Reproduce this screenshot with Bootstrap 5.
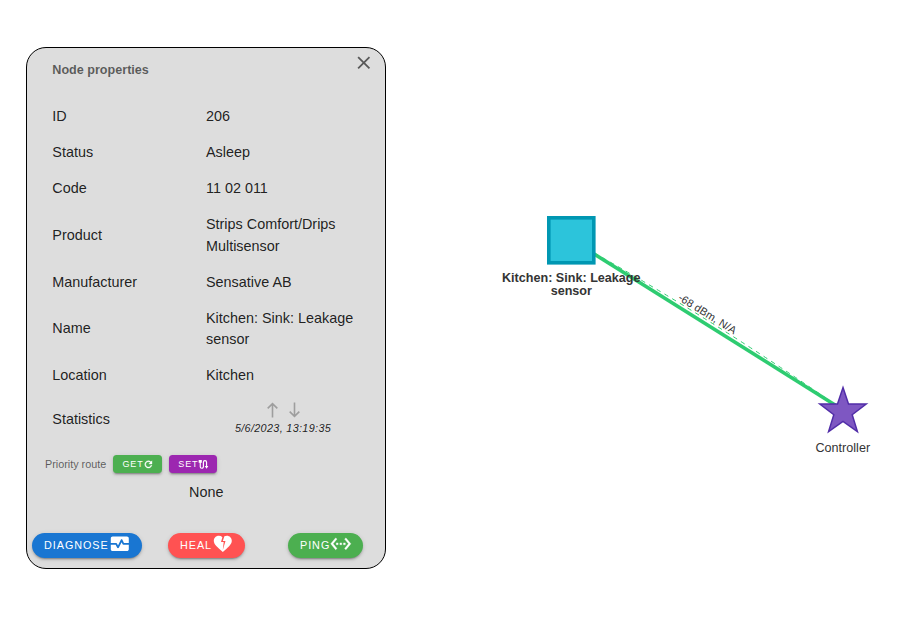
<!DOCTYPE html>
<html lang="en">
<head>
<meta charset="utf-8">
<meta name="viewport" content="width=device-width, initial-scale=1">
<title>Node properties</title>
<link href="https://cdn.jsdelivr.net/npm/bootstrap@5.3.0/dist/css/bootstrap.min.css" rel="stylesheet">
<style>
body{font-family:"Liberation Sans",Arial,sans-serif;font-size:14.4px;line-height:21.6px;color:rgba(0,0,0,.87);background:#fff;width:919px;height:627px;overflow:hidden}
svg{display:block;flex:none}
.node-panel{width:360px;height:522px;margin:47px 0 0 26px;background:#ddd;border:1px solid #000;border-radius:20px;flex:none}
.panel-head{height:51px;padding:11.6px 10.4px 0 25.3px;font-size:12.6px;font-weight:700;color:rgba(0,0,0,.6)}
.close-btn{width:21.6px;height:21.6px;padding:0;border:0;background:none;color:rgba(0,0,0,.6);margin-top:-7.4px}
.props{width:332px;margin-left:25.3px}
.prop{display:grid;grid-template-columns:153.7px 155px;align-items:center;padding:7.2px 0}
.prop-stats{height:52px;padding:0}
.arrows{gap:11px;color:#9e9e9e;height:18px;padding-left:1px}
.stamp{font-size:10.8px;line-height:18px;letter-spacing:.34px;font-style:italic}
.stats-value{margin:-1px 1px 0 0}
.route-row{height:18px;margin:9.5px 0 0 18px;font-size:10.8px;color:rgba(0,0,0,.6)}
.act{border:0;border-radius:50rem;height:25.2px;padding:0 12px;font-size:10.8px;letter-spacing:.96px;line-height:1;color:#fff;box-shadow:0 3px 1px -2px rgba(0,0,0,.2),0 2px 2px rgba(0,0,0,.14),0 1px 5px rgba(0,0,0,.12)}
.act svg{margin:-2px -.4px 0 0}
.act-sm{border-radius:3.5px;height:18px;padding:0 9px;font-size:9px;letter-spacing:.9px}
.route-row .act-sm{margin-left:7.2px}
.act-sm svg{margin:-1px -.9px 0 -.4px}
.act-green{background:#4caf50}.act-purple{background:#9c27b0}.act-blue{background:#1976d2}.act-red{background:#ff5252}
.actions{display:grid;grid-template-columns:136px 120px 80px;justify-items:start;margin:28.5px 0 0 5px}
.none-line{margin:9px 0 0 162px}
.bold-label{font-weight:700}
</style>
<script src="https://cdn.jsdelivr.net/npm/bootstrap@5.3.0/dist/js/bootstrap.bundle.min.js"></script>
</head>
<body class="d-flex">
<aside class="node-panel">
  <header class="panel-head d-flex justify-content-between"><span>Node properties</span>
    <button class="close-btn" aria-label="Close"><svg width="21.6" height="21.6" viewBox="0 0 24 24" fill="currentColor"><path d="M19 6.41 17.59 5 12 10.59 6.41 5 5 6.41 10.59 12 5 17.59 6.41 19 12 13.41 17.59 19 19 17.59 13.41 12z"/></svg></button>
  </header>
  <div class="props">
    <div class="prop"><span>ID</span><span>206</span></div>
    <div class="prop"><span>Status</span><span>Asleep</span></div>
    <div class="prop"><span>Code</span><span>11 02 011</span></div>
    <div class="prop"><span>Product</span><span>Strips Comfort/Drips Multisensor</span></div>
    <div class="prop"><span>Manufacturer</span><span>Sensative AB</span></div>
    <div class="prop"><span>Name</span><span>Kitchen: Sink: Leakage sensor</span></div>
    <div class="prop"><span>Location</span><span>Kitchen</span></div>
    <div class="prop prop-stats"><span>Statistics</span>
      <div class="text-center stats-value">
        <div class="arrows d-flex justify-content-center align-items-center">
          <svg width="11" height="16" viewBox="0 0 11 16" fill="none" stroke="currentColor" stroke-width="1.6"><path d="M5.5 15.5V1.8M.7 6.4l4.8-4.8 4.8 4.8"/></svg>
          <svg width="11" height="16" viewBox="0 0 11 16" fill="none" stroke="currentColor" stroke-width="1.6"><path d="M5.5.5v13.7M.7 9.6l4.8 4.8 4.8-4.8"/></svg>
        </div>
        <div class="stamp">5/6/2023, 13:19:35</div>
      </div>
    </div>
  </div>
  <div class="route-row d-flex align-items-center">
    <span>Priority route</span>
    <button class="act act-sm act-green d-inline-flex align-items-center">GET<svg width="10.8" height="10.8" viewBox="0 0 24 24" fill="currentColor" stroke="currentColor" stroke-width=".8"><path d="M17.65 6.35A8 8 0 1 0 19.73 14h-2.08A6 6 0 1 1 16.22 7.78L13 11h7V4z"/></svg></button>
    <button class="act act-sm act-purple d-inline-flex align-items-center">SET<svg width="10.8" height="10.8" viewBox="0 0 24 24" fill="none" stroke="currentColor" stroke-width="2.6"><path d="M5 6v11a3.500 3.500 0 0 0 7 0V7a3.500 3.500 0 0 1 7 0v10"/><path d="M1.500 2.500h7v6h-7zM15 15.500h8L19 21.500z" fill="currentColor" stroke="none"/></svg></button>
  </div>
  <div class="none-line">None</div>
  <div class="actions">
    <button class="act act-blue d-inline-flex align-items-center">DIAGNOSE<svg width="21.6" height="21.6" viewBox="0 0 24 24" fill="currentColor"><path d="M15.110 12.450 14 10.240l-3.110 6.210c-.160.340-.510.550-.890.550s-.730-.210-.890-.550L7.380 13H2v5c0 1.100.900 2 2 2h16c1.100 0 2-.900 2-2v-5h-6c-.380 0-.730-.210-.890-.550z"/><path d="M20 4H4c-1.100 0-2 .900-2 2v5h6c.380 0 .730.210.890.550L10 13.760l3.110-6.210c.340-.680 1.450-.680 1.790 0L16.620 11H22V6c0-1.100-.900-2-2-2z"/></svg></button>
    <button class="act act-red d-inline-flex align-items-center">HEAL<svg width="21.6" height="21.6" viewBox="0 0 24 24" fill="currentColor"><path d="M16.500 3c-.960 0-1.900.250-2.730.690L12 9h3l-3 10 1-9h-3l1.540-5.390A5.400 5.400 0 0 0 7.500 3C4.420 3 2 5.420 2 8.500c0 4.130 4.160 7.180 10 12.500 5.470-4.940 10-8.260 10-12.500C22 5.420 19.580 3 16.500 3z"/></svg></button>
    <button class="act act-green d-inline-flex align-items-center">PING<svg width="21.6" height="21.6" viewBox="0 0 24 24" fill="currentColor" stroke="currentColor" stroke-width=".4"><path d="M7.770 6.760 6.230 5.480.820 12l5.410 6.520 1.540-1.280L3.420 12l4.350-5.240zM7 13h2v-2H7v2zm10-2h-2v2h2v-2zm-6 2h2v-2h-2v2zm6.770-7.520-1.540 1.280L20.580 12l-4.350 5.240 1.540 1.280L23.180 12l-5.410-6.520z"/></svg></button>
  </div>
</aside>
<main class="flex-grow-1">
  <svg width="533" height="627" viewBox="386 0 533 627" font-family="Liberation Sans,Arial,sans-serif" font-size="12.6" fill="#343434" text-anchor="middle">
    <path d="M571 239.500L843 410" stroke="#2ecc71" stroke-width="3.6"/>
    <path d="M571 240Q710 317 843 410" fill="none" stroke="#2ecc71" stroke-width="1" stroke-dasharray="4.500 4.500"/>
    <text font-size="10.8" letter-spacing=".12" transform="translate(705.5 317) rotate(32)">-68 dBm, N/A</text>
    <rect x="548.8" y="217.8" width="45" height="45" fill="#2cc4db" stroke="#0097b2" stroke-width="3.6"/>
    <path d="M843 387.500l5.500 16.500h17.700l-14 10.700 5.200 16.800-14.400-10.200-14.400 10.200 5.200-16.800-14-10.700h17.700z" fill="#7e57c2" stroke="#512da8" stroke-width="1.5"/>
    <text class="bold-label" x="571.3" y="282">Kitchen: Sink: Leakage</text>
    <text class="bold-label" x="571.3" y="295">sensor</text>
    <text x="842.8" y="452">Controller</text>
  </svg>
</main>
</body>
</html>
